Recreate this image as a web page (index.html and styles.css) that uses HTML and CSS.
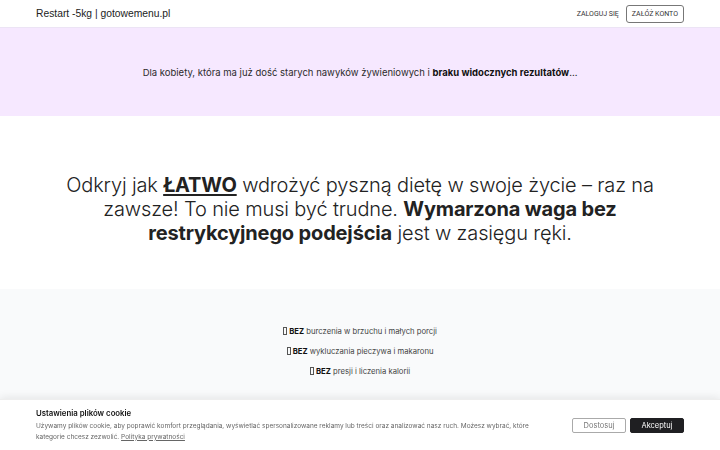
FILE: index.html
```html
<!DOCTYPE html>
<html lang="pl">
<head>
	<meta charset="UTF-8">
	<title>Restart -5kg | gotowemenu.pl</title>
	<link rel="stylesheet" href="styles.css">
</head>
<body>
	<header class="top">
		<div class="wrap top-inner">
			<a class="brand" href="#">Restart -5kg | gotowemenu.pl</a>
			<nav class="nav">
				<a class="nav-link" href="#">Zaloguj się</a>
				<a class="nav-btn" href="#">Załóż konto</a>
			</nav>
		</div>
	</header>

	<section class="intro">
		<p>Dla kobiety, która ma już dość starych nawyków żywieniowych i <b>braku widocznych rezultatów</b>...</p>
	</section>

	<section class="hero">
		<h1>Odkryj jak <u><b>ŁATWO</b></u> wdrożyć pyszną dietę w swoje życie – raz na zawsze! To nie musi być trudne. <b>Wymarzona waga bez restrykcyjnego podejścia</b> jest w zasięgu ręki.</h1>
	</section>

	<section class="list">
		<ul>
			<li><span class="tofu"></span> <b>BEZ</b> burczenia w brzuchu i małych porcji</li>
			<li><span class="tofu"></span> <b>BEZ</b> wykluczania pieczywa i makaronu</li>
			<li><span class="tofu"></span> <b>BEZ</b> presji i liczenia kalorii</li>
		</ul>
	</section>

	<div class="cookie">
		<div class="wrap cookie-inner">
			<div class="cookie-text">
				<h2>Ustawienia plików cookie</h2>
				<p>Używamy plików cookie, aby poprawić komfort przeglądania, wyświetlać spersonalizowane reklamy lub treści oraz analizować nasz ruch. Możesz wybrać, które kategorie chcesz zezwolić. <a href="#">Polityka prywatności</a></p>
			</div>
			<div class="cookie-btns">
				<button class="btn btn-light">Dostosuj</button>
				<button class="btn btn-dark">Akceptuj</button>
			</div>
		</div>
	</div>
</body>
</html>
```

FILE: styles.css
```css
* {
	padding: 0;
	margin: 0;
	box-sizing: border-box;
}
html, body {
	height: 100%;
}
body {
	font-family: Inter, "Noto Sans", sans-serif;
	color: #1f1f1f;
	background: #f9fafb;
	overflow: hidden;
}
a {
	color: inherit;
	text-decoration: none;
}
.wrap {
	padding: 0 36px;
}

/* header */
.top {
	background: #fff;
	height: 28px;
	border-bottom: 1px solid #ece4f5;
}
.top-inner {
	height: 100%;
	display: flex;
	align-items: center;
	justify-content: space-between;
}
.brand {
	font-family: "Liberation Sans", Arial, sans-serif;
	font-size: 10.3px;
	color: #222;
}
.nav {
	display: flex;
	align-items: center;
	gap: 7px;
}
.nav-link, .nav-btn {
	font-family: Roboto, sans-serif;
	font-size: 7px;
	text-transform: uppercase;
	color: #333;
}
.nav-btn {
	border: 1px solid #777;
	border-radius: 3px;
	padding: 3px 5px;
	line-height: 10px;
}

/* purple strip */
.intro {
	background: #f6e8ff;
	height: 88px;
	display: flex;
	align-items: center;
	justify-content: center;
	padding-top: 1px;
	font-size: 9.5px;
	color: #2b2b2b;
}
.intro b {
	font-weight: 700;
	color: #111;
}

/* hero */
.hero {
	background: #fff;
	height: 173px;
	display: flex;
	align-items: center;
	justify-content: center;
	padding: 12px 60px 0;
}
.hero h1 {
	font-size: 20px;
	font-weight: 300;
	line-height: 24px;
	text-align: center;
	color: #222;
	letter-spacing: -0.15px;
}
.hero b {
	font-weight: 700;
}
.hero u {
	text-decoration-thickness: 2px;
	text-underline-offset: 2px;
}

/* list */
.list {
	padding-top: 36px;
}
.list ul {
	list-style: none;
	text-align: center;
	font-size: 7.7px;
	color: #444;
}
.list li {
	height: 20px;
	line-height: 14px;
}
.list b {
	font-weight: 700;
	color: #111;
}
.tofu {
	display: inline-block;
	width: 4px;
	height: 8px;
	border: 1px solid #555;
	vertical-align: -1px;
}

/* cookie banner */
.cookie {
	position: fixed;
	left: 0;
	right: 0;
	bottom: 0;
	height: 51px;
	background: #fff;
	box-shadow: 0 -2px 8px rgba(0, 0, 0, 0.08);
	border-top: 1px solid #eee;
}
.cookie-inner {
	height: 100%;
	display: flex;
	align-items: center;
	justify-content: space-between;
	gap: 30px;
}
.cookie-text h2 {
	font-size: 7.8px;
	font-weight: 600;
	color: #111;
	margin-bottom: 3px;
}
.cookie-text p {
	font-size: 6.5px;
	line-height: 11px;
	color: #666;
	max-width: 505px;
}
.cookie-text a {
	text-decoration: underline;
}
.cookie-btns {
	display: flex;
	gap: 4px;
	flex-shrink: 0;
}
.btn {
	font-family: Inter, sans-serif;
	font-size: 7.5px;
	width: 54px;
	height: 15px;
	border-radius: 2px;
	cursor: pointer;
}
.btn-light {
	background: #fff;
	border: 1px solid #aaa;
	color: #777;
}
.btn-dark {
	background: #1f1f22;
	border: 1px solid #1f1f22;
	color: #fff;
}
```
